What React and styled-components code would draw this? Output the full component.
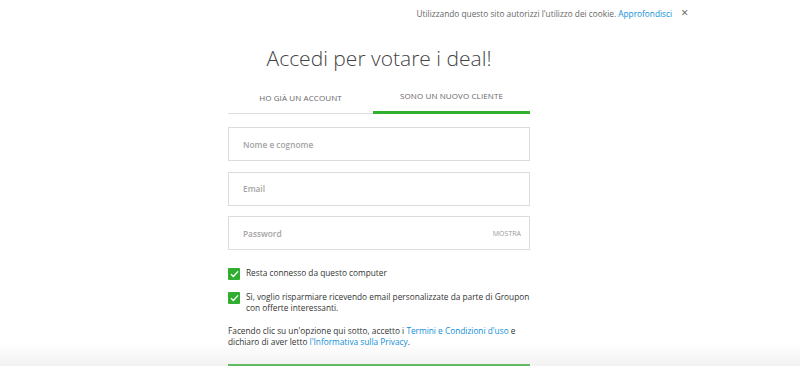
import React from 'react';
import styled, { createGlobalStyle } from 'styled-components';

const GlobalStyle = createGlobalStyle`
  body {
    margin: 0;
    background: #fff;
    font-family: "Open Sans", "Liberation Sans", sans-serif;
    color: #333;
  }
`;

const Page = styled.div`
  width: 800px;
  height: 366px;
  overflow: hidden;
  position: relative;
`;

const CookieBar = styled.div`
  display: flex;
  justify-content: flex-end;
  align-items: center;
  gap: 9px;
  height: 26px;
  padding-right: 112px;
  font-size: 8.3px;
  color: #666;
`;

const Link = styled.a`
  color: #0d8ed8;
  text-decoration: none;
`;

const Close = styled.span`
  font-size: 12px;
  color: #555;
  line-height: 1;
`;

const Form = styled.div`
  width: 302px;
  margin-left: 228px;
  display: flex;
  flex-direction: column;
`;

const Title = styled.h1`
  margin: 17px 0 0;
  font-size: 21px;
  font-weight: 300;
  color: #444;
  text-align: center;
  line-height: 30px;
`;

const Tabs = styled.div`
  display: grid;
  grid-template-columns: 145px 1fr;
  margin-top: 7px;
`;

const Tab = styled.div`
  height: 31px;
  display: flex;
  align-items: center;
  justify-content: center;
  font-size: 8px;
  color: #666;
  letter-spacing: 0.1px;
  border-bottom: ${p => (p.$active ? '3px solid #2fb12f' : '1px solid #ddd')};
  margin-top: ${p => (p.$active ? '0' : '2px')};
`;

const Fields = styled.div`
  display: flex;
  flex-direction: column;
  gap: 10.5px;
  margin-top: 13px;
`;

const Field = styled.div`
  height: 32px;
  border: 1px solid #dcdcdc;
  display: flex;
  align-items: center;
  justify-content: space-between;
  padding: 0 8px 0 14px;
`;

const Placeholder = styled.span`
  font-size: 8.3px;
  font-weight: 600;
  color: #a3a3a3;
`;

const Show = styled.span`
  font-size: 7px;
  color: #999;
`;

const Checks = styled.div`
  display: flex;
  flex-direction: column;
  gap: 12px;
  margin-top: 18px;
`;

const CheckRow = styled.label`
  display: flex;
  align-items: flex-start;
  gap: 6px;
  font-size: 8.3px;
  line-height: 10.5px;
  color: #333;
`;

const Box = styled.span`
  flex: none;
  width: 12px;
  height: 12px;
  background: #2fae2f;
  border-radius: 1px;
  display: flex;
  align-items: center;
  justify-content: center;
`;

const Legal = styled.p`
  margin: 12px 0 0;
  font-size: 8.3px;
  line-height: 11px;
  color: #333;
`;

const Submit = styled.button`
  margin-top: 17px;
  height: 36px;
  border: none;
  padding: 0;
  background: #66c466;
  color: #fff;
`;

const Fade = styled.div`
  position: absolute;
  left: 0;
  right: 0;
  bottom: 0;
  height: 24px;
  background: linear-gradient(rgba(0, 0, 0, 0), rgba(0, 0, 0, 0.05));
  pointer-events: none;
`;

const Tick = () => (
  <svg width="9" height="8" viewBox="0 0 9 8">
    <path d="M1 4.2 L3.4 6.4 L8 1.4" fill="none" stroke="#fff" strokeWidth="1.4" />
  </svg>
);

const App = () => (
  <Page>
    <GlobalStyle />
    <CookieBar>
      <span>
        Utilizzando questo sito autorizzi l'utilizzo dei cookie. <Link>Approfondisci</Link>
      </span>
      <Close>×</Close>
    </CookieBar>
    <Form>
      <Title>Accedi per votare i deal!</Title>
      <Tabs>
        <Tab>HO GIÀ UN ACCOUNT</Tab>
        <Tab $active>SONO UN NUOVO CLIENTE</Tab>
      </Tabs>
      <Fields>
        <Field><Placeholder>Nome e cognome</Placeholder></Field>
        <Field><Placeholder>Email</Placeholder></Field>
        <Field><Placeholder>Password</Placeholder><Show>MOSTRA</Show></Field>
      </Fields>
      <Checks>
        <CheckRow>
          <Box><Tick /></Box>
          <span>Resta connesso da questo computer</span>
        </CheckRow>
        <CheckRow>
          <Box><Tick /></Box>
          <span>Sì, voglio risparmiare ricevendo email personalizzate da parte di Groupon con offerte interessanti.</span>
        </CheckRow>
      </Checks>
      <Legal>
        Facendo clic su un'opzione qui sotto, accetto i <Link>Termini e Condizioni d'uso</Link> e
        dichiaro di aver letto <Link>l'Informativa sulla Privacy</Link>.
      </Legal>
      <Submit />
    </Form>
    <Fade />
  </Page>
);

export default App;
